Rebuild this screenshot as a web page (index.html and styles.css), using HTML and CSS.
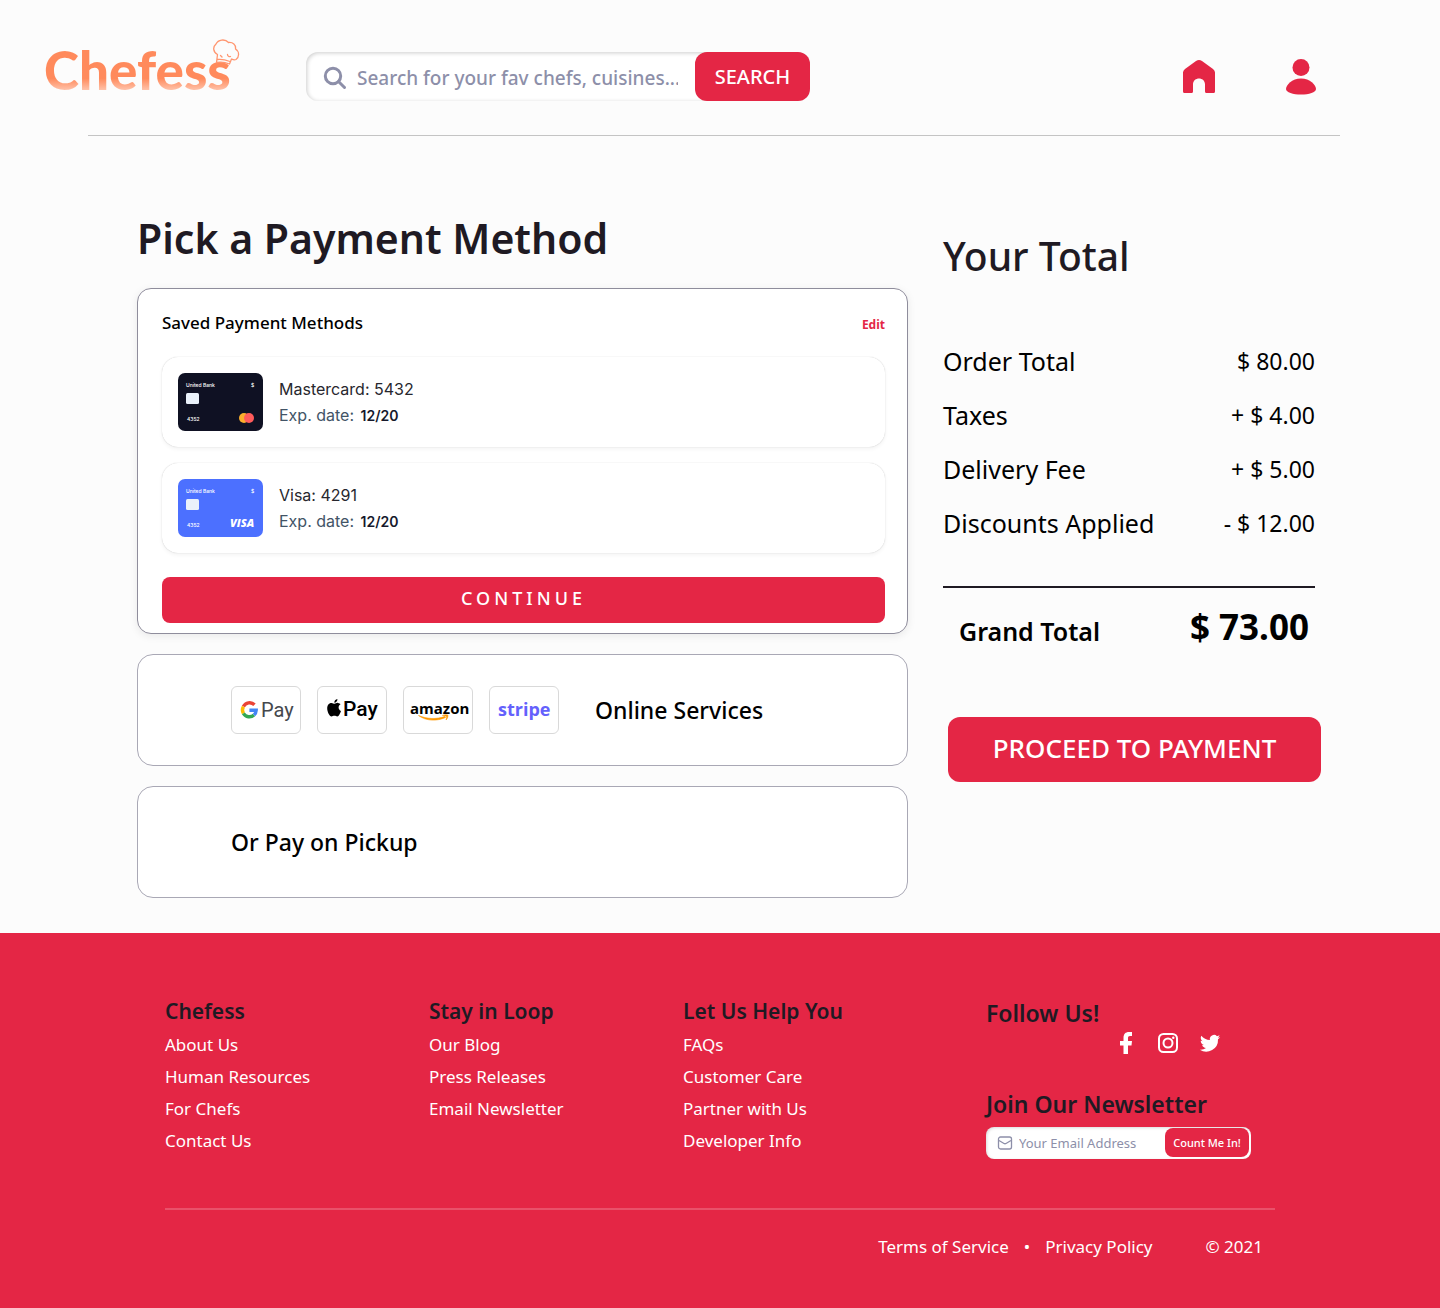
FILE: index.html
```html
<!DOCTYPE html>
<html lang="en">
<head>
<meta charset="utf-8">
<meta name="viewport" content="width=device-width, initial-scale=1">
<title>Chefess – Payment</title>
<link rel="stylesheet" href="styles.css">
</head>
<body>
<header class="header">
  <a class="logo" href="#"><span class="logo-text">Chefess</span>
    <svg class="logo-hat" viewBox="0 0 28 28" aria-hidden="true"><path d="M4.500 23.500 5.500 15.500C1 13 .5 8 4 5 6 .5 13-.5 16.500 3.500 21 3 24 6 23.500 10 27.500 12.500 27.500 18 24 20.500 22 21.500 20.500 20.500 19.500 20L17.500 25C13 23 9 22.500 4.500 23.500Z" fill="#fcfcfc"/><path d="M4.500 23.500 5.500 15.500C1 13 .5 8 4 5 6 .5 13-.5 16.500 3.500 21 3 24 6 23.500 10 27.500 12.500 27.500 18 24 20.500 22 21.500 20.500 20.500 19.500 20L17.500 25C13 23 9 22.500 4.500 23.500ZM5.500 20.500C10 20 14 21 18 22.500M8.500 16.500 10 18M15.500 15.500C15.500 17 17 18 18.500 17.500" fill="none" stroke="#ff9670" stroke-width="1.300" stroke-linejoin="round" stroke-linecap="round"/></svg>
  </a>
  <form class="search">
    <svg class="search-icon" viewBox="0 0 24 24" aria-hidden="true"><circle cx="10" cy="10" r="7.700"/><path d="m15.500 15.500 6 6"/></svg>
    <input class="search-input" type="search" aria-label="Search" placeholder="Search for your fav chefs, cuisines...">
    <button class="search-button" type="button">SEARCH</button>
  </form>
  <nav class="header-nav" aria-label="Main">
    <a href="#" aria-label="Home"><svg class="nav-icon" viewBox="0 0 36 36"><path d="M2 13.500Q2 11.500 4 10L15 2Q18 0 21 2L32 10Q34 11.500 34 13.500V32.500Q34 34 32.500 34H25.500Q24 34 24 32.500V25.500C24 17.500 12 17.500 12 25.500V32.500Q12 34 10.500 34H3.500Q2 34 2 32.500Z" fill="#e42645"/></svg></a>
    <a href="#" aria-label="Account"><svg class="nav-icon" viewBox="0 0 36 36"><circle cx="18" cy="8.500" r="8.500" fill="#e42645"/><path d="M3 30C3 26 9 19.500 18 19.500S33 26 33 30C33 33.500 26 35.500 18 35.500S3 33.500 3 30Z" fill="#e42645"/></svg></a>
  </nav>
</header>

<main class="main">
  <section class="methods">
    <h1 class="page-title">Pick a Payment Method</h1>
    <div class="panel saved">
      <div class="saved-head">
        <h2 class="saved-title">Saved Payment Methods</h2>
        <a class="edit" href="#">Edit</a>
      </div>
      <ul class="cards">
        <li class="card-row">
          <svg class="card-art" viewBox="0 0 85 58" aria-hidden="true"><rect width="85" height="58" rx="7" fill="#0f1123"/><g class="card-text"><text x="8" y="14">United Bank</text><text x="73" y="14">$</text><text x="9" y="48">4352</text></g><rect x="8" y="20" width="13" height="11" rx="1.500" fill="#eaf1fa"/><circle cx="66" cy="45" r="5" fill="#fbae2c"/><circle cx="71" cy="45" r="5" fill="#ff5b5b"/></svg>
          <div class="card-info"><p class="card-name">Mastercard: 5432</p><p class="card-date">Exp. date: <b>12/20</b></p></div>
        </li>
        <li class="card-row">
          <svg class="card-art" viewBox="0 0 85 58" aria-hidden="true"><rect width="85" height="58" rx="7" fill="#4c70ff"/><g class="card-text"><text x="8" y="14">United Bank</text><text x="73" y="14">$</text><text x="9" y="48">4352</text></g><rect x="8" y="20" width="13" height="11" rx="1.500" fill="#eaf1fa"/><text class="visa" x="52" y="48">VISA</text></svg>
          <div class="card-info"><p class="card-name">Visa: 4291</p><p class="card-date">Exp. date: <b>12/20</b></p></div>
        </li>
      </ul>
      <button class="continue" type="button">CONTINUE</button>
    </div>
    <div class="panel option">
      <ul class="services">
        <li class="service"><svg viewBox="0 0 68 46" role="img" aria-label="Google Pay"><g fill="none" stroke-width="3.400"><path d="M22.500 17.800A6.900 6.900 0 0 0 11.400 19.600" stroke="#ea4335"/><path d="M11.400 19.600A6.900 6.900 0 0 0 11.400 26.400" stroke="#fbbc04"/><path d="M11.400 26.400A6.900 6.900 0 0 0 22 28" stroke="#34a853"/><path d="M22 28A6.900 6.900 0 0 0 24.200 23.200H17.400" stroke="#4285f4"/></g><text class="gpay" x="29" y="30">Pay</text></svg></li>
        <li class="service"><svg viewBox="0 0 68 46" role="img" aria-label="Apple Pay"><path d="M16.500 16.700C17.500 16.700 18.600 15.700 20 15.900 21.200 16 22 16.500 22.500 17.300 19.700 18.900 20.200 22.800 23 24 22.300 26 20.900 29.500 19.300 29.500 18.200 29.500 17.700 28.800 16.400 28.800S14.500 29.500 13.500 29.500C11.500 29.500 9.200 25 9.200 21.300 9.200 17.700 11.500 15.900 13.500 15.900 14.800 15.900 15.700 16.700 16.500 16.700ZM16.300 15.700C16.100 13.900 17.600 12.300 19.400 12 19.600 14 18.100 15.700 16.300 15.700Z"/><text class="apay" x="25" y="29">Pay</text></svg></li>
        <li class="service"><svg viewBox="0 0 68 46" role="img" aria-label="Amazon"><text class="amazon" x="6" y="27">amazon</text><path d="M14.500 28.500C22 34 32.500 34.500 41.500 30.500L40.800 29.500C32 32.500 23 32 14.500 28.500ZM38.500 28.500C40.500 27.500 43 27.500 44 28.200 44 30 43.200 32 42 33 42.500 31.500 43 30 42.500 29.400 41.500 28.800 40 28.900 38.500 28.500Z" fill="#ff9900" stroke="#ff9900" stroke-width=".6"/></svg></li>
        <li class="service"><svg viewBox="0 0 68 46" role="img" aria-label="Stripe"><text class="stripe" x="8" y="29">stripe</text></svg></li>
      </ul>
      <h2 class="option-title">Online Services</h2>
    </div>
    <div class="panel option">
      <h2 class="option-title">Or Pay on Pickup</h2>
    </div>
  </section>

  <section class="summary">
    <h2 class="summary-title">Your Total</h2>
    <table class="totals">
      <tbody>
        <tr><th scope="row">Order Total</th><td>$ 80.00</td></tr>
        <tr><th scope="row">Taxes</th><td>+ $ 4.00</td></tr>
        <tr><th scope="row">Delivery Fee</th><td>+ $ 5.00</td></tr>
        <tr><th scope="row">Discounts Applied</th><td>- $ 12.00</td></tr>
      </tbody>
    </table>
    <div class="grand"><span>Grand Total</span><strong class="grand-value">$ 73.00</strong></div>
    <button class="proceed" type="button">PROCEED TO PAYMENT</button>
  </section>
</main>

<footer class="footer">
  <div class="footer-columns">
    <nav aria-label="Chefess"><h2 class="footer-title">Chefess</h2>
      <ul class="links"><li><a href="#">About Us</a></li><li><a href="#">Human Resources</a></li><li><a href="#">For Chefs</a></li><li><a href="#">Contact Us</a></li></ul></nav>
    <nav aria-label="Stay in Loop"><h2 class="footer-title">Stay in Loop</h2>
      <ul class="links"><li><a href="#">Our Blog</a></li><li><a href="#">Press Releases</a></li><li><a href="#">Email Newsletter</a></li></ul></nav>
    <nav aria-label="Let Us Help You"><h2 class="footer-title">Let Us Help You</h2>
      <ul class="links"><li><a href="#">FAQs</a></li><li><a href="#">Customer Care</a></li><li><a href="#">Partner with Us</a></li><li><a href="#">Developer Info</a></li></ul></nav>
    <div class="follow">
      <h2 class="follow-title">Follow Us!</h2>
      <div class="social">
        <a href="#" aria-label="Facebook"><svg viewBox="0 0 24 24"><path d="M9.500 23V14.500H6V10H9.500V7C9.500 3 11.500 1 15 1H18V5H16C14.500 5 14 5.800 14 7V10H18L17.500 14.500H14V23Z" fill="#fff"/></svg></a>
        <a href="#" aria-label="Instagram"><svg viewBox="0 0 24 24" fill="none" stroke="#fff" stroke-width="2"><rect x="3" y="3" width="18" height="18" rx="4.500"/><circle cx="12" cy="12" r="4.500"/><circle cx="17.300" cy="6.700" r="1.200" fill="#fff" stroke="none"/></svg></a>
        <a href="#" aria-label="Twitter"><svg viewBox="0 0 24 24"><path d="M22.200 5.900c-.7.300-1.500.5-2.400.6.900-.5 1.500-1.300 1.800-2.300-.8.500-1.700.8-2.600 1A4.200 4.200 0 0 0 11.900 9C8.500 8.900 5.400 7.200 3.300 4.700c-1.100 1.900-.5 4.400 1.300 5.600-.7 0-1.300-.2-1.900-.5 0 2 1.400 3.800 3.300 4.200-.6.200-1.200.2-1.900.1.500 1.700 2.100 2.900 3.900 2.900A8.400 8.400 0 0 1 1.800 18.700 11.800 11.800 0 0 0 20 8.200c.9-.6 1.600-1.400 2.200-2.300Z" fill="#fff"/></svg></a>
      </div>
      <label class="follow-title" for="email">Join Our Newsletter</label>
      <form class="newsletter">
        <svg class="mail-icon" viewBox="0 0 16 16" aria-hidden="true"><rect x="1.500" y="2" width="13" height="12" rx="2"/><path d="M2 5.500 7 8.500Q8 9 9 8.500L14 5.500"/></svg>
        <input class="newsletter-input" id="email" type="email" placeholder="Your Email Address">
        <button class="newsletter-button" type="button">Count Me In!</button>
      </form>
    </div>
  </div>
  <div class="legal"><a href="#">Terms of Service</a><span class="dot">•</span><a href="#">Privacy Policy</a><span class="copyright">© 2021</span></div>
</footer>
</body>
</html>
```
FILE: styles.css
```css
* { box-sizing: border-box; }
body, h1, h2, p, ul { margin: 0; padding: 0; }
body { background: #fcfcfc; color: #000; font-family: "Noto Sans", sans-serif; font-size: 16px; }
ul { list-style: none; }
a { color: inherit; text-decoration: none; }
button, input { font-family: inherit; border: 0; margin: 0; padding: 0; }
button { background: #e42645; color: #fff; cursor: pointer; }
svg { display: block; flex: none; }
h1, h2 { font-weight: 500; }

.header { display: flex; align-items: center; height: 136px; padding: 17px 121px 0 44px; background: linear-gradient(#c4c4c4, #c4c4c4) 88px 100% / calc(100% - 188px) 1px no-repeat; }
.logo { position: relative; width: 196px; margin-right: 66px; padding-bottom: 14px; }
.logo-text { display: block; font: 900 53px/60px Lato, sans-serif; color: transparent; background: linear-gradient(#ff8a5c 64%, #ffc4ac 84%); background-clip: text; -webkit-background-clip: text; }
.logo-hat { position: absolute; right: 0; top: -1px; width: 28px; height: 28px; }
.search { display: flex; align-items: center; width: 504px; height: 49px; border-radius: 12px; background: #fff; box-shadow: inset 1px 1px 4px rgba(0, 0, 0, .2); }
.search-icon { width: 24px; height: 24px; margin: 2px 10px 0 17px; fill: none; stroke: #8d8fa9; stroke-width: 3; stroke-linecap: round; }
.search-input { flex: 1; min-width: 0; background: transparent; font-size: 19px; font-weight: 500; line-height: 32px; padding-top: 3px; }
input::placeholder { color: #8d8fa9; opacity: 1; }
.search-button { width: 115px; height: 49px; border-radius: 12px; font-size: 20px; font-weight: 500; }
.header-nav { display: flex; gap: 66px; margin-left: auto; }
.nav-icon { width: 36px; height: 36px; }

.main { display: grid; grid-template-columns: minmax(0, 1fr) 378px; gap: 35px; padding: 72px 119px 35px 137px; }
.page-title { font-size: 41px; line-height: 60px; font-weight: 600; color: #1f1a23; margin-bottom: 20px; }
.panel { background: #fff; border: 1px solid #a9a8b5; border-radius: 16px; }
.panel + .panel { margin-top: 20px; }
.saved { padding: 22px 22px 10px 24px; border-color: #8f8d9c; border-radius: 14px; box-shadow: 0 2px 8px rgba(0, 0, 0, .08); }
.saved-head { display: flex; justify-content: space-between; height: 24px; line-height: 24px; margin-bottom: 22px; }
.saved-title { font-size: 17px; }
.edit { font-size: 12px; font-weight: 700; color: #e42645; padding-top: 2px; }
.cards { display: grid; gap: 16px; }
.card-row { display: flex; align-items: center; gap: 16px; height: 90px; padding: 0 16px; border-radius: 16px; box-shadow: 0 0 1px rgba(0, 0, 0, .25), 0 2px 4px rgba(0, 0, 0, .05); }
.card-art { width: 85px; height: 58px; }
.card-text { font: 500 5px Inter, sans-serif; fill: #fff; }
.visa { font: italic 800 11px "Open Sans", sans-serif; fill: #fff; }
.card-info { font: 16px/26px Inter, sans-serif; color: #27272e; }
.card-date { color: #425466; }
.card-date b { margin-left: 2px; font-size: 14px; font-weight: 600; color: #16192c; }
.continue { display: block; width: 100%; height: 46px; margin-top: 24px; border-radius: 8px; font-size: 18px; letter-spacing: 4px; font-weight: 500; padding-bottom: 4px; }
.option { display: flex; align-items: center; gap: 36px; height: 112px; padding: 0 93px; }
.services { display: flex; gap: 16px; }
.service { width: 70px; height: 48px; border: 1px solid #d9d9d9; border-radius: 6px; }
.option-title { font-size: 23px; line-height: 32px; }
.gpay { font: 20px Roboto, sans-serif; fill: #45484d; }
.apay { font: 500 21px Roboto, sans-serif; }
.amazon { font: 700 15px "Open Sans", sans-serif; }
.stripe { font: 700 18px "Open Sans", sans-serif; fill: #6461fc; }

.summary { padding-top: 18px; }
.summary-title { font-size: 39px; line-height: 60px; color: #1f1a23; }
.totals { width: 372px; margin: 48px 0 36px; border-collapse: collapse; font-size: 25px; line-height: 54px; }
.totals th { padding: 0; text-align: left; font-weight: 400; }
.totals td { padding: 0; text-align: right; font-size: 23px; }
.grand { display: flex; align-items: center; justify-content: space-between; width: 372px; height: 87px; padding: 0 6px 0 16px; border-top: 2px solid #1f1a23; font-size: 25px; font-weight: 600; }
.grand-value { font-size: 35px; font-weight: 700; padding-bottom: 8px; }
.proceed { width: 373px; height: 65px; margin: 44px 0 0 5px; padding-bottom: 4px; border-radius: 12px; font-size: 26px; font-weight: 500; }

.footer { background: #e42645; color: #fff; padding: 62px 165px 45px; }
.footer-columns { display: grid; grid-template-columns: 264fr 254fr 303fr 289fr; }
.footer-title { font-size: 21px; line-height: 32px; font-weight: 600; color: #1f1a23; margin-bottom: 2px; }
.links, .legal { font-size: 17px; line-height: 32px; }
.follow { padding-top: 2px; }
.follow-title { display: block; font-size: 23px; line-height: 32px; font-weight: 600; color: #1f1a23; }
.social { display: flex; gap: 18px; margin: 2px 0 33px 128px; }
.social svg { width: 24px; height: 24px; }
.newsletter { display: flex; align-items: center; width: 265px; height: 32px; margin-top: 7px; padding: 0 2px 1px 11px; border-radius: 8px; background: #fff; box-shadow: inset 1px 1px 3px rgba(0, 0, 0, .15); }
.mail-icon { width: 16px; height: 16px; margin-right: 6px; fill: none; stroke: #8d8fa9; stroke-width: 1.3; }
.newsletter-input { flex: 1; min-width: 0; background: transparent; font-size: 13px; line-height: 24px; }
.newsletter-button { width: 84px; height: 29px; border-radius: 8px; font-size: 11px; font-weight: 500; }
.legal { display: flex; justify-content: flex-end; margin-top: 49px; padding: 21px 12px 0; border-top: 2px solid rgba(255, 255, 255, .2); }
.dot { padding: 0 15px; }
.copyright { margin-left: 53px; }
```
